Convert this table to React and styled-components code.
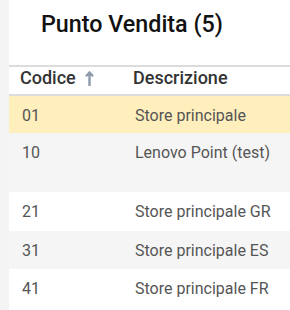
import React from 'react';
import styled, { createGlobalStyle } from 'styled-components';

const GlobalStyle = createGlobalStyle`
  html, body {
    margin: 0;
    padding: 0;
    background: #fff;
    font-family: Roboto, "Liberation Sans", sans-serif;
  }
`;

const Page = styled.div`
  display: flex;
  width: 290px;
  height: 310px;
  overflow: hidden;
`;

const Rail = styled.div`
  width: 9px;
  flex: none;
  background: #f4f4f4;
`;

const Panel = styled.div`
  flex: 1;
  display: flex;
  flex-direction: column;
`;

const Title = styled.h2`
  margin: 0;
  height: 65px;
  box-sizing: border-box;
  padding: 10px 0 0 32px;
  font-size: 23.3px;
  font-weight: 500;
  color: #111;
  line-height: 28px;
`;

const Table = styled.div`
  border-top: 2px solid #dcdcdc;
`;

const Row = styled.div`
  display: grid;
  grid-template-columns: 113px 1fr;
  height: ${p => p.h || 38}px;
  box-sizing: border-box;
  padding-top: 10px;
  background: ${p => (p.active ? '#ffefbd' : p.alt ? '#f5f5f5' : '#fff')};
`;

const HeadRow = styled(Row)`
  height: 29px;
  padding-top: 0;
  border-bottom: 2px solid #dcdcdc;
`;

const HeadCell = styled.div`
  display: flex;
  align-items: center;
  gap: 9px;
  height: 20px;
  padding-left: ${p => p.pl}px;
  font-size: 18px;
  font-weight: 500;
  color: #333;
`;

const Cell = styled.div`
  padding-left: ${p => p.pl}px;
  font-size: 16px;
  color: #555;
  line-height: 20px;
`;

const SortIcon = () => (
  <svg width="9" height="15" viewBox="0 0 9 15" style={{ marginTop: 2 }}>
    <path d="M4.5 1.5 L4.5 15 M1 5.2 L4.5 1.5 L8 5.2" stroke="#8d9aab" strokeWidth="2.4" fill="none" />
  </svg>
);

const stores = [
  { code: '01', name: 'Store principale', h: 37, active: true },
  { code: '10', name: 'Lenovo Point (test)', h: 59, alt: true },
  { code: '21', name: 'Store principale GR', h: 39 },
  { code: '31', name: 'Store principale ES', h: 38, alt: true },
  { code: '41', name: 'Store principale FR', h: 41 },
];

export default function App() {
  return (
    <Page>
      <GlobalStyle />
      <Rail />
      <Panel>
        <Title>Punto Vendita (5)</Title>
        <Table>
          <HeadRow>
            <HeadCell pl={11}>Codice <SortIcon /></HeadCell>
            <HeadCell pl={11}>Descrizione</HeadCell>
          </HeadRow>
          {stores.map(s => (
            <Row key={s.code} h={s.h} active={s.active} alt={s.alt}>
              <Cell pl={13}>{s.code}</Cell>
              <Cell pl={13}>{s.name}</Cell>
            </Row>
          ))}
        </Table>
      </Panel>
    </Page>
  );
}
